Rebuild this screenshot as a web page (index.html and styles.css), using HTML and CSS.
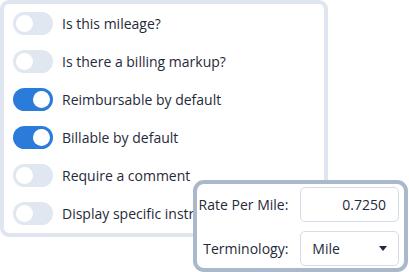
FILE: index.html
```html
<!DOCTYPE html>
<html>
<head>
<meta charset="utf-8">
<link rel="stylesheet" href="styles.css">
</head>
<body>
<div class="card">
  <div class="row"><span class="toggle"></span><span class="label">Is this mileage?</span></div>
  <div class="row"><span class="toggle"></span><span class="label">Is there a billing markup?</span></div>
  <div class="row"><span class="toggle on"></span><span class="label">Reimbursable by default</span></div>
  <div class="row"><span class="toggle on"></span><span class="label">Billable by default</span></div>
  <div class="row"><span class="toggle"></span><span class="label">Require a comment</span></div>
  <div class="row"><span class="toggle"></span><span class="label">Display specific instructions</span></div>
</div>
<div class="popup">
  <div class="field">
    <span class="flabel">Rate Per Mile:</span>
    <div class="input num">0.7250</div>
  </div>
  <div class="field">
    <span class="flabel">Terminology:</span>
    <div class="input select">Mile<svg class="caret" width="8" height="5" viewBox="0 0 8 5"><path d="M0 0H8L4 5Z" fill="#1f2a3a"/></svg></div>
  </div>
</div>
</body>
</html>
```
FILE: styles.css
```css
html, body {
  margin: 0;
  padding: 0;
  background: #fff;
}
body {
  width: 409px;
  height: 272px;
  overflow: hidden;
  position: relative;
  font-family: "Open Sans", "Noto Sans", sans-serif;
  font-size: 14px;
  color: #1f2a3a;
}
.card {
  box-sizing: border-box;
  width: 328px;
  height: 237px;
  border: 4px solid #dfe6ef;
  border-radius: 9px;
  padding: 0 0 0 9px;
  overflow: hidden;
}
.row {
  height: 38px;
  display: flex;
  align-items: center;
  gap: 9px;
  white-space: nowrap;
}
.toggle {
  flex: none;
  position: relative;
  width: 40px;
  height: 23px;
  border-radius: 12px;
  background: #e0e7f0;
}
.toggle::after {
  content: "";
  position: absolute;
  top: 3px;
  left: 3px;
  width: 17px;
  height: 17px;
  border-radius: 50%;
  background: #fff;
}
.toggle.on {
  background: #2b7bdb;
}
.toggle.on::after {
  left: 20px;
}
.popup {
  position: absolute;
  left: 193px;
  top: 180px;
  box-sizing: border-box;
  width: 215px;
  height: 92px;
  border: 4px solid #a9b8cb;
  border-radius: 11px;
  background: #fff;
  padding: 3px 5px 1px 0;
  display: flex;
  flex-direction: column;
  gap: 9px;
}
.field {
  display: flex;
  align-items: center;
  gap: 12px;
}
.flabel {
  width: 93px;
  text-align: right;
  white-space: nowrap;
}
.input {
  box-sizing: border-box;
  width: 100px;
  height: 35px;
  border: 1px solid #d3dde9;
  border-radius: 5px;
  display: flex;
  align-items: center;
  padding: 0 11px 0 11px;
}
.num {
  justify-content: flex-end;
  padding-right: 12px;
}
.select {
  justify-content: space-between;
}
.caret {
  display: block;
}
```
